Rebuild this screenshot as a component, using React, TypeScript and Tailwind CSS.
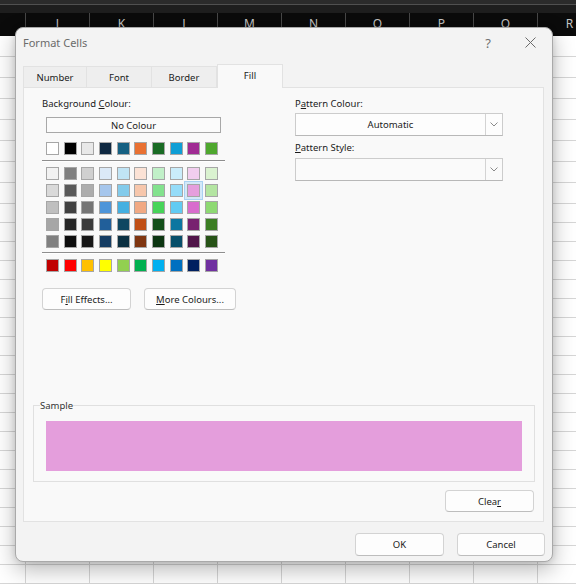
import React from "react";

const theme = ["#ffffff", "#000000", "#e8e8e8", "#0e2841", "#156082", "#e97132", "#196b24", "#0f9ed5", "#a02b93", "#4ea72e"];
const shades = [
  ["#f2f2f2", "#808080", "#d0d0d0", "#dbe9f7", "#c0e4f5", "#fbe2d5", "#c1f0c8", "#caedfb", "#f2ceef", "#daf2d0"],
  ["#d9d9d9", "#595959", "#adadad", "#a6c6ec", "#83cbeb", "#f7c7ac", "#83e28e", "#95dcf8", "#e59edd", "#b4e5a2"],
  ["#bfbfbf", "#404040", "#757575", "#4e95d9", "#45b0e1", "#f1a983", "#47d459", "#61cbf3", "#d86dcd", "#8ed973"],
  ["#a6a6a6", "#262626", "#3a3a3a", "#215f9a", "#0f4761", "#c04f15", "#124f1a", "#0b76a0", "#782170", "#3b7d23"],
  ["#808080", "#0d0d0d", "#171717", "#153d64", "#0a2f41", "#7f3510", "#0c3511", "#074f6a", "#501549", "#275317"],
];
const standard = ["#c00000", "#ff0000", "#ffc000", "#ffff00", "#92d050", "#00b050", "#00b0f0", "#0070c0", "#002060", "#7030a0"];

// column I is mostly off-screen, its letter isn't visible
const columns = ["", "J", "K", "L", "M", "N", "O", "P", "Q", "R"];
const rowHeights = [...Array(8).fill(21), ...Array(20).fill(19)];

function Swatch({ color, selected }: { color: string; selected?: boolean }) {
  return (
    <div
      className={
        "w-[13px] h-[13px] border border-[#a6a6a6] " +
        (selected ? "shadow-[0_0_0_2px_#d3e8f8,0_0_0_3px_#a9d1f1]" : "")
      }
      style={{ background: color }}
    />
  );
}

function SwatchRow({ colors, selected }: { colors: string[]; selected?: number }) {
  return (
    <div className="ml-[4px] w-[172px] flex justify-between">
      {colors.map((c, i) => (
        <Swatch key={i} color={c} selected={i === selected} />
      ))}
    </div>
  );
}

function Button({ children, className = "" }: { children: React.ReactNode; className?: string }) {
  return (
    <div
      className={
        "h-[22px] flex items-center justify-center rounded-[4px] border border-[#d3d3d3] border-b-[#bdbdbd] bg-[#fdfdfd] text-[#1b1b1b] " +
        className
      }
    >
      {children}
    </div>
  );
}

function Chevron() {
  return (
    <svg width="8" height="5" viewBox="0 0 8 5" fill="none">
      <path d="M0.5 0.5L4 4L7.5 0.5" stroke="#8a8a8a" strokeWidth="1" />
    </svg>
  );
}

function Select({ value, muted }: { value?: string; muted?: boolean }) {
  return (
    <div
      className={
        "w-[208px] h-[23px] flex border border-[#cccccc] border-b-[#b8b8b8] " +
        (muted ? "bg-[#fafafa]" : "bg-[#fdfdfd]")
      }
    >
      <div className="flex-1 flex items-center justify-center text-[#1b1b1b]">{value}</div>
      <div className="w-[17px] flex items-center justify-center border-l border-[#d3d3d3]">
        <Chevron />
      </div>
    </div>
  );
}

export default function App() {
  return (
    <div className="relative w-[576px] h-[584px] overflow-hidden bg-white font-['Noto_Sans',sans-serif]">
      {/* spreadsheet behind */}
      <div className="h-[4px] bg-[#2b2b2b]" />
      <div className="h-px bg-[#505050]" />
      <div className="h-[8px] bg-[#1e1e1e]" />
      <div className="flex h-[23px] ml-[-38px] bg-[#0b0b0b]">
        {columns.map((c, i) => (
          <div
            key={i}
            className="w-[64px] shrink-0 border-r border-[#474747] flex justify-center pt-[3px] text-[12px] leading-[16px] text-[#c4c4c4]"
          >
            {c}
          </div>
        ))}
      </div>
      {rowHeights.map((h, r) => (
        <div key={r} className="flex ml-[-38px]" style={{ height: h }}>
          {columns.map((_, i) => (
            <div key={i} className="w-[64px] shrink-0 border-r border-b border-[#d6d6d6]" />
          ))}
        </div>
      ))}

      {/* dialog window */}
      <div className="absolute left-[15px] top-[27px] w-[538px] h-[535px] flex flex-col rounded-[8px] border border-[#a9a9a9] bg-[#f3f3f3] shadow-[0_8px_22px_rgba(0,0,0,0.28),0_0_6px_rgba(0,0,0,0.12)] text-[9.5px] leading-[13px] text-[#1b1b1b]">
        {/* title bar */}
        <div className="h-[36px] flex items-start pt-[7px] pl-[7px] pr-[16px]">
          <div className="flex-1 text-[11px] leading-[16px] text-[#6b6b6b]">Format Cells</div>
          <div className="w-[16px] text-center text-[13px] leading-[16px] text-[#707070] mr-[29px]">?</div>
          <svg width="11" height="11" viewBox="0 0 11 11" className="mt-[2px]">
            <path d="M0.5 0.5L10.5 10.5M10.5 0.5L0.5 10.5" stroke="#6b6b6b" strokeWidth="1" />
          </svg>
        </div>

        {/* tabs */}
        <div className="h-[23px] flex items-end pl-[7px]">
          <div className="w-[64px] h-[21px] flex items-center justify-center bg-[#eeeeee] border border-b-0 border-[#e2e2e2]">
            Number
          </div>
          <div className="w-[65px] h-[21px] flex items-center justify-center bg-[#eeeeee] border border-b-0 border-l-0 border-[#e2e2e2]">
            Font
          </div>
          <div className="w-[65px] h-[21px] flex items-center justify-center bg-[#eeeeee] border border-b-0 border-l-0 border-[#e2e2e2]">
            Border
          </div>
          <div className="relative z-10 w-[66px] h-[24px] -mb-px flex items-center justify-center pb-[2px] bg-[#f9f9f9] border border-b-0 border-[#e2e2e2]">
            Fill
          </div>
        </div>

        {/* panel */}
        <div className="ml-[7px] mr-[8px] h-[435px] flex flex-col border border-[#e2e2e2] bg-[#f9f9f9]">
          <div className="flex pt-[9px]">
            {/* background colour */}
            <div className="ml-[18px] w-[253px] flex flex-col">
              <div>
                Background <span className="underline">C</span>olour:
              </div>
              <div className="ml-[4px] mt-[7px] w-[175px] h-[16px] flex items-center justify-center border border-[#a8a8a8] bg-[#fbfbfb]">
                No Colour
              </div>
              <div className="mt-[9px]">
                <SwatchRow colors={theme} />
              </div>
              <div className="mt-[5px] w-[183px] border-t border-[#8e8e8e] border-b border-b-white" />
              <div className="mt-[5px] flex flex-col gap-[4px]">
                {shades.map((row, i) => (
                  <SwatchRow key={i} colors={row} selected={i === 1 ? 8 : undefined} />
                ))}
              </div>
              <div className="mt-[4px] w-[183px] border-t border-[#8e8e8e] border-b border-b-white" />
              <div className="mt-[5px]">
                <SwatchRow colors={standard} />
              </div>
              <div className="mt-[16px] flex gap-[13px]">
                <Button className="w-[89px]">
                  F<span className="underline">i</span>ll Effects...
                </Button>
                <Button className="w-[92px]">
                  <span className="underline">M</span>ore Colours...
                </Button>
              </div>
            </div>

            {/* pattern */}
            <div className="flex flex-col">
              <div>
                P<span className="underline">a</span>ttern Colour:
              </div>
              <div className="mt-[3px]">
                <Select value="Automatic" />
              </div>
              <div className="mt-[5px]">
                <span className="underline">P</span>attern Style:
              </div>
              <div className="mt-[4px]">
                <Select muted />
              </div>
            </div>
          </div>

          <div className="flex-1" />

          {/* sample */}
          <fieldset className="ml-[9px] mr-[8px] h-[83px] border border-[#e0e0e0] px-0 pt-[9px]">
            <legend className="ml-[6px] px-0 text-[#333]">Sample</legend>
            <div className="mx-[12px] h-[50px] bg-[#e49edc]" />
          </fieldset>

          <div className="mt-[8px] mb-[9px] mr-[9px] flex justify-end">
            <Button className="w-[89px]">
              Clea<span className="underline">r</span>
            </Button>
          </div>
        </div>

        {/* footer buttons */}
        <div className="mt-[11px] pr-[7px] flex justify-end gap-[13px]">
          <Button className="w-[89px] h-[23px] border-[#4f8fd8] border-b-[#4f8fd8]">OK</Button>
          <Button className="w-[88px] h-[23px]">Cancel</Button>
        </div>
      </div>
    </div>
  );
}
